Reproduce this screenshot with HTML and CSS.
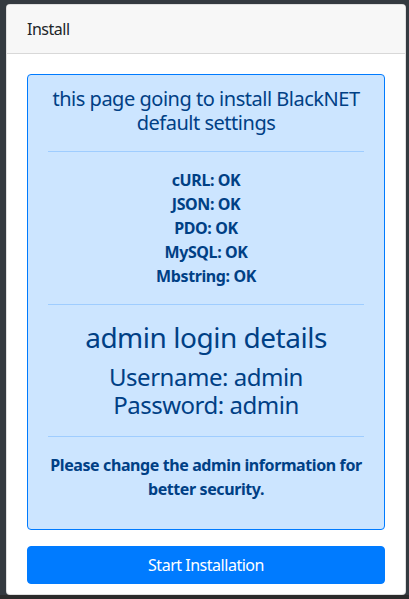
FILE: index.html
```html
<!DOCTYPE html>
<html>
<head>
  <meta charset="UTF-8">
  <title>Install</title>
  <link rel="stylesheet" href="styles.css">
</head>
<body>
  <div class="card">
    <div class="card-header">Install</div>
    <div class="card-body">
      <div class="alert">
        <h5>this page going to install BlackNET default settings</h5>
        <hr>
        <p class="checks">
          <b>cURL: OK</b><br>
          <b>JSON: OK</b><br>
          <b>PDO: OK</b><br>
          <b>MySQL: OK</b><br>
          <b>Mbstring: OK</b>
        </p>
        <hr>
        <h3>admin login details</h3>
        <h4>Username: admin<br>Password: admin</h4>
        <hr>
        <p><b>Please change the admin information for better security.</b></p>
      </div>
      <button class="btn">Start Installation</button>
    </div>
  </div>
</body>
</html>
```

FILE: styles.css
```css
html {
  background: #2b2b2b;
}
body {
  font-family: 'Noto Sans', sans-serif;
  font-size: 16px;
  line-height: 1.5;
  letter-spacing: -0.03em;
  color: #212529;
  background: #343a40;
  margin: 0;
  padding: 4px 2px 0 6px;
  height: 591px;
  overflow: hidden;
}
b {
  letter-spacing: -0.025em;
}
.card {
  background: white;
  border: 1px solid rgba(0,0,0,0.125);
  border-radius: 4px;
  width: 400px;
  box-sizing: border-box;
  overflow: hidden;
}
.card-header {
  padding: 12px 20px;
  background: #f7f7f7;
  border-bottom: 1px solid rgba(0,0,0,0.125);
  font-size: 16px;
}
.card-body {
  padding: 20px 20px 10px;
}
.alert {
  background: #cce5ff;
  border: 1px solid #007bff;
  border-radius: 4px;
  color: #004085;
  padding: 12px 20px;
  margin-bottom: 16px;
  text-align: center;
}
.alert h5, .alert h4, .alert h3 {
  margin: 0 0 8px;
  font-weight: 400;
  line-height: 1.2;
}
.alert h5 {
  font-size: 20px;
}
.alert h4 {
  font-size: 24px;
}
.alert h3 {
  font-size: 28px;
}
.alert p {
  margin: 0 0 16px;
}
.alert hr {
  border: 0;
  border-top: 1px solid #9fcdff;
  margin: 16px 0;
}
.btn {
  display: block;
  width: 100%;
  height: 38px;
  padding: 6px 12px;
  background: #007bff;
  color: white;
  border: 1px solid #007bff;
  border-radius: 4px;
  font-family: inherit;
  font-size: 16px;
  line-height: 1.5;
  letter-spacing: -0.03em;
}
```
